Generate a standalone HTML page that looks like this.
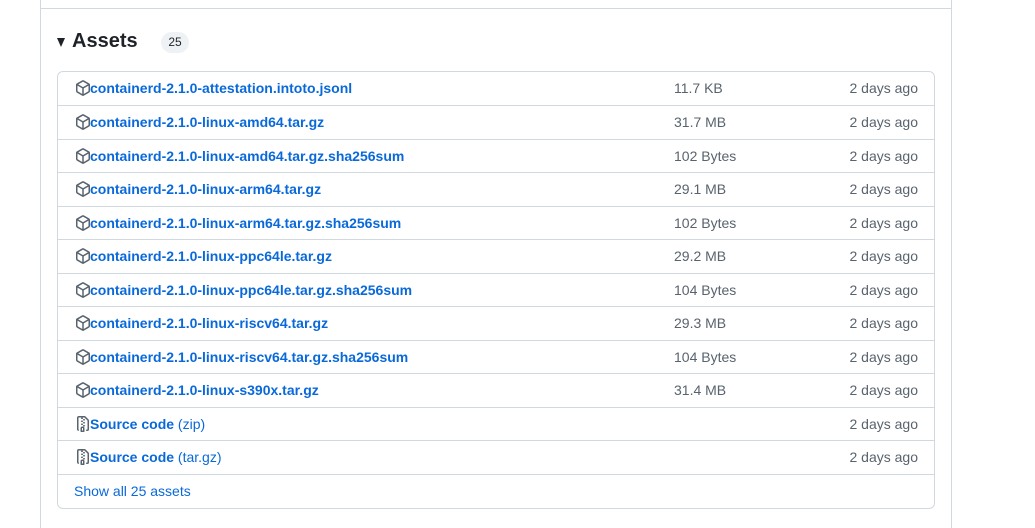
<!DOCTYPE html><html><head><style>
body{margin:0;width:1035px;height:521px;background:#fff;font-family:"Liberation Sans",sans-serif;position:relative;overflow:hidden}
.outer{position:absolute;left:40px;top:-2px;width:910px;height:530px;border:1px solid #d1d9e0;border-top:none;border-bottom:none}
.hl{position:absolute;left:40px;top:8px;width:912px;height:1px;background:#d1d9e0}
h2{position:absolute;left:72px;top:30px;margin:0;font-size:20px;font-weight:bold;color:#1f2328}
.tri{position:absolute;left:57px;top:38px;width:0;height:0;border-left:4.5px solid transparent;border-right:4.5px solid transparent;border-top:9px solid #1f2328}
.badge{position:absolute;left:161px;top:32px;width:28px;height:21px;border-radius:11px;background:#eff2f5;font-size:12px;color:#1f2328;text-align:center;line-height:21px}
.box{position:absolute;left:57px;top:71px;width:876px;height:436px;border:1px solid #d1d9e0;border-radius:6px}
.row{position:absolute;left:0;width:876px;height:33px;border-top:1px solid #d1d9e0;font-size:14px;line-height:33px}
.row:first-child{border-top:none}
.ic{position:absolute;left:17px;top:8px}
.n{position:absolute;left:32px;color:#0969da;font-weight:bold}
.n span{font-weight:normal}
.s{position:absolute;left:616px;color:#59636e}
.d{position:absolute;right:16px;color:#59636e}
.show{position:absolute;left:16px;color:#0969da}
</style></head><body>
<svg width="0" height="0" style="position:absolute"><defs>
<path id="pk" d="m8.878.392 5.25 3.045c.54.314.872.89.872 1.514v6.098a1.75 1.75 0 0 1-.872 1.514l-5.25 3.045a1.75 1.75 0 0 1-1.756 0l-5.25-3.045A1.75 1.75 0 0 1 1 11.049V4.951c0-.624.332-1.201.872-1.514L7.122.392a1.75 1.75 0 0 1 1.756 0ZM7.875 1.69l-4.63 2.685L8 7.133l4.755-2.758-4.63-2.685a.248.248 0 0 0-.25 0ZM2.5 5.677v5.372c0 .09.047.171.125.216l4.625 2.683V8.432Zm6.25 8.271 4.625-2.683a.25.25 0 0 0 .125-.216V5.677L8.75 8.432Z"/>
<path id="zp" d="M3.5 1.75v11.5c0 .09.048.173.126.217a.75.75 0 0 1-.752 1.298A1.748 1.748 0 0 1 2 13.25V1.75C2 .784 2.784 0 3.75 0h5.586c.464 0 .909.185 1.237.513l2.914 2.914c.329.328.513.773.513 1.237v8.586A1.75 1.75 0 0 1 12.25 15h-.5a.75.75 0 0 1 0-1.5h.5a.25.25 0 0 0 .25-.25V4.664a.25.25 0 0 0-.073-.177L9.513 1.573a.25.25 0 0 0-.177-.073H7.25a.75.75 0 0 1 0 1.5h-.5a.75.75 0 0 1 0-1.5h-3a.25.25 0 0 0-.25.25Zm3.75 8.75h.5c.966 0 1.75.784 1.75 1.75v3a.75.75 0 0 1-.75.75h-2.5a.75.75 0 0 1-.75-.75v-3c0-.966.784-1.75 1.75-1.75ZM6 5.25a.75.75 0 0 1 .75-.75h.5a.75.75 0 0 1 0 1.5h-.5A.75.75 0 0 1 6 5.25Zm.75 2.25h.5a.75.75 0 0 1 0 1.5h-.5a.75.75 0 0 1 0-1.5ZM8 6.75A.75.75 0 0 1 8.75 6h.5a.75.75 0 0 1 0 1.5h-.5A.75.75 0 0 1 8 6.75ZM8.75 3h.5a.75.75 0 0 1 0 1.5h-.5a.75.75 0 0 1 0-1.5ZM8 9.75A.75.75 0 0 1 8.75 9h.5a.75.75 0 0 1 0 1.5h-.5A.75.75 0 0 1 8 9.75Zm-1 2.5v2.25h1v-2.25a.25.25 0 0 0-.25-.25h-.5a.25.25 0 0 0-.25.25Z"/>
</defs></svg>
<div class="outer"></div><div class="hl"></div>
<div class="tri"></div><h2>Assets</h2><div class="badge">25</div>
<div class="box">
<div class="row" style="top:0"><svg class="ic" width="16" height="16" viewBox="0 0 16 16" fill="#59636e"><use href="#pk"/></svg><span class="n">containerd-2.1.0-attestation.intoto.jsonl</span><span class="s">11.7 KB</span><span class="d">2 days ago</span></div>
<div class="row" style="top:33px"><svg class="ic" width="16" height="16" viewBox="0 0 16 16" fill="#59636e"><use href="#pk"/></svg><span class="n">containerd-2.1.0-linux-amd64.tar.gz</span><span class="s">31.7 MB</span><span class="d">2 days ago</span></div>
<div class="row" style="top:67px"><svg class="ic" width="16" height="16" viewBox="0 0 16 16" fill="#59636e"><use href="#pk"/></svg><span class="n">containerd-2.1.0-linux-amd64.tar.gz.sha256sum</span><span class="s">102 Bytes</span><span class="d">2 days ago</span></div>
<div class="row" style="top:100px"><svg class="ic" width="16" height="16" viewBox="0 0 16 16" fill="#59636e"><use href="#pk"/></svg><span class="n">containerd-2.1.0-linux-arm64.tar.gz</span><span class="s">29.1 MB</span><span class="d">2 days ago</span></div>
<div class="row" style="top:134px"><svg class="ic" width="16" height="16" viewBox="0 0 16 16" fill="#59636e"><use href="#pk"/></svg><span class="n">containerd-2.1.0-linux-arm64.tar.gz.sha256sum</span><span class="s">102 Bytes</span><span class="d">2 days ago</span></div>
<div class="row" style="top:167px"><svg class="ic" width="16" height="16" viewBox="0 0 16 16" fill="#59636e"><use href="#pk"/></svg><span class="n">containerd-2.1.0-linux-ppc64le.tar.gz</span><span class="s">29.2 MB</span><span class="d">2 days ago</span></div>
<div class="row" style="top:201px"><svg class="ic" width="16" height="16" viewBox="0 0 16 16" fill="#59636e"><use href="#pk"/></svg><span class="n">containerd-2.1.0-linux-ppc64le.tar.gz.sha256sum</span><span class="s">104 Bytes</span><span class="d">2 days ago</span></div>
<div class="row" style="top:234px"><svg class="ic" width="16" height="16" viewBox="0 0 16 16" fill="#59636e"><use href="#pk"/></svg><span class="n">containerd-2.1.0-linux-riscv64.tar.gz</span><span class="s">29.3 MB</span><span class="d">2 days ago</span></div>
<div class="row" style="top:268px"><svg class="ic" width="16" height="16" viewBox="0 0 16 16" fill="#59636e"><use href="#pk"/></svg><span class="n">containerd-2.1.0-linux-riscv64.tar.gz.sha256sum</span><span class="s">104 Bytes</span><span class="d">2 days ago</span></div>
<div class="row" style="top:301px"><svg class="ic" width="16" height="16" viewBox="0 0 16 16" fill="#59636e"><use href="#pk"/></svg><span class="n">containerd-2.1.0-linux-s390x.tar.gz</span><span class="s">31.4 MB</span><span class="d">2 days ago</span></div>
<div class="row" style="top:335px"><svg class="ic" width="16" height="16" viewBox="0 0 16 16" fill="#59636e"><use href="#zp"/></svg><span class="n">Source code <span>(zip)</span></span><span class="d">2 days ago</span></div>
<div class="row" style="top:368px"><svg class="ic" width="16" height="16" viewBox="0 0 16 16" fill="#59636e"><use href="#zp"/></svg><span class="n">Source code <span>(tar.gz)</span></span><span class="d">2 days ago</span></div>
<div class="row" style="top:402px"><span class="show">Show all 25 assets</span></div>
</div>
</body></html>
